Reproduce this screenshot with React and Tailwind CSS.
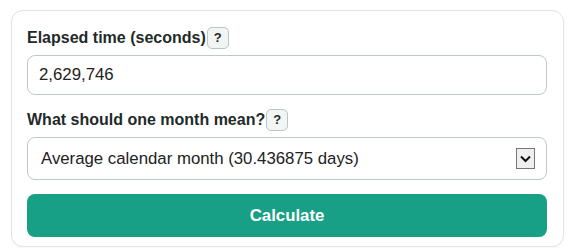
import React from "react";

function Help() {
  return (
    <span className="ml-[1px] inline-flex h-[22px] w-[22px] items-center justify-center rounded-[5px] border border-[#b9c6c3] bg-[#f1f5f4] text-[13px] font-bold text-[#1f2a2a]">
      ?
    </span>
  );
}

export default function App() {
  return (
    <div className="h-[248px] w-[574px] bg-white pl-[11px] pt-[10px] font-['Liberation_Sans',Arial,sans-serif]">
      <div className="h-[237px] w-[553px] rounded-[12px] border border-[#dfe5e3] bg-white px-[15px] pt-[16px] shadow-[0_1px_3px_rgba(0,0,0,0.04)]">
        <div className="flex h-[22px] items-center text-[16px] font-bold leading-[22px] text-[#1f2a2a]">
          <span>Elapsed time (seconds)</span>
          <Help />
        </div>
        <div className="mt-[6px] flex h-[40px] w-[520px] items-center rounded-[8px] border border-[#bccac6] px-[11px] text-[16.8px] text-[#222]">
          2,629,746
        </div>
        <div className="mt-[14px] flex h-[22px] items-center text-[16px] font-bold leading-[22px] text-[#1f2a2a]">
          <span>What should one month mean?</span>
          <Help />
        </div>
        <div className="mt-[6px] flex h-[43px] w-[520px] items-center justify-between rounded-[8px] border border-[#bccac6] pl-[13px] pr-[11px] text-[16.8px] text-[#222]">
          <span>Average calendar month (30.436875 days)</span>
          <span className="flex h-[21px] w-[19px] items-center justify-center border border-[#767676] bg-[#efefef]">
            <svg width="11" height="8" viewBox="0 0 11 8">
              <path d="M1 1.5 L5.5 6 L10 1.5" fill="none" stroke="#111" strokeWidth="2" />
            </svg>
          </span>
        </div>
        <button className="mt-[14px] flex h-[43px] w-[520px] items-center justify-center rounded-[8px] bg-[#17a085] text-[16.8px] font-bold text-white">
          Calculate
        </button>
      </div>
    </div>
  );
}
